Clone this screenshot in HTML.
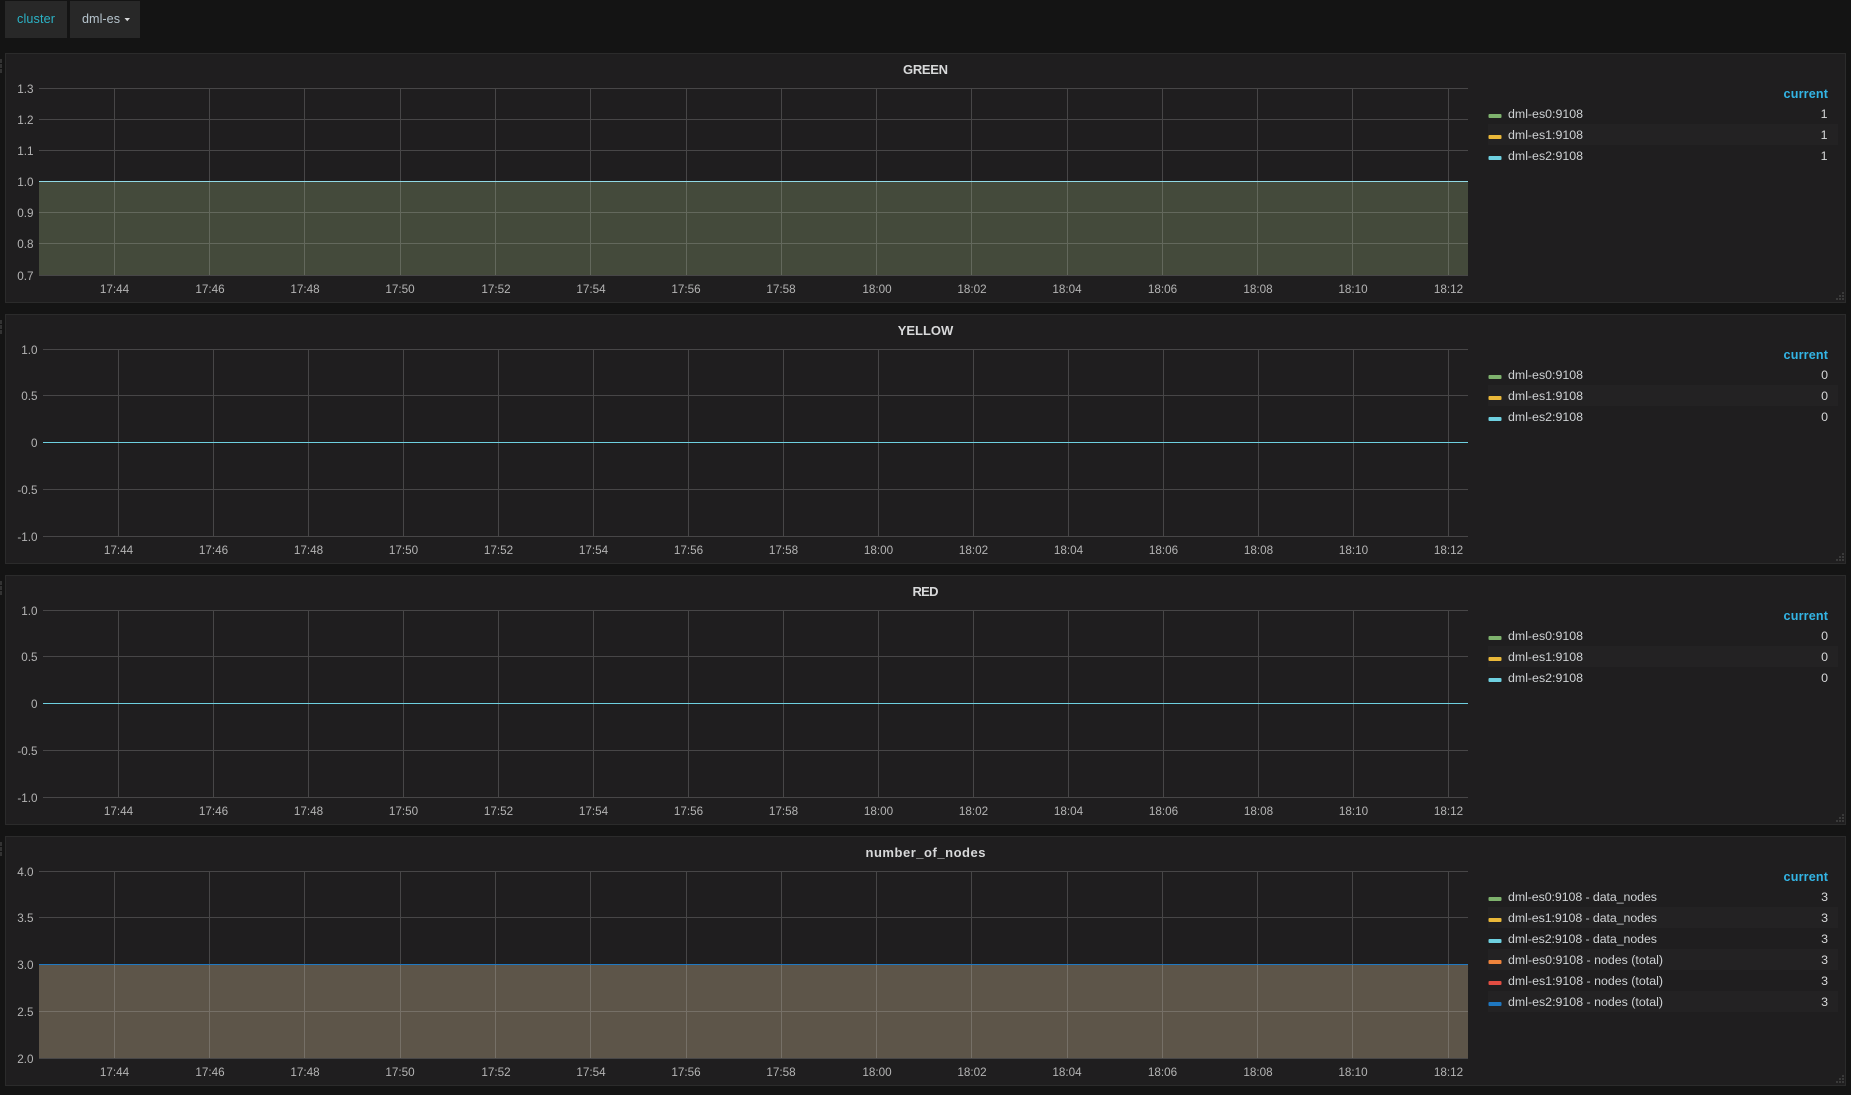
<!DOCTYPE html>
<html><head><meta charset="utf-8"><title>cluster</title>
<style>
html,body{margin:0;padding:0;background:#141414;width:1851px;height:1095px;overflow:hidden}
svg{display:block;font-family:"Liberation Sans",sans-serif}
.p{fill:#1f1e1f;stroke:#2b2b2b}
.g{stroke:#c8c8c8;stroke-opacity:.24;stroke-width:1;fill:none}
.t{fill:#d8d9da;font-size:13px;font-weight:bold;text-anchor:middle}
.x{fill:#b4b4b4;font-size:11.7px;text-anchor:middle}
.y{fill:#b4b4b4;font-size:11.7px;text-anchor:end}
.l{fill:#cfd2d4;font-size:12.4px}
.v{fill:#d8d9da;font-size:12.4px;text-anchor:end}
.c{fill:#33b5e5;font-size:12.6px;font-weight:bold;text-anchor:end}
.s{fill:#232223}
.h{fill:#3a3a3a}
.b{fill:#333}
</style></head><body>
<svg width="1851" height="1095" viewBox="0 0 1851 1095" xmlns="http://www.w3.org/2000/svg">
<rect x="5" y="1" width="62" height="37" fill="#282828"/>
<rect x="70" y="1" width="70" height="37" fill="#282828"/>
<text x="17" y="23" font-size="12.6" fill="#2bb3c6" textLength="38">cluster</text>
<text x="82" y="23" font-size="12.6" fill="#b6c4cd" textLength="38">dml-es</text>
<path d="M124.5 18h5.5l-2.75 3.2z" fill="#d8d9da"/>

<!-- Panel 1 -->
<rect class="p" x="5.5" y="53.5" width="1840" height="249"/>
<path class="b" d="M0 59h2v4H0zM0 64h2v4H0zM0 69h2v4H0z"/>
<rect x="39" y="181" width="1429" height="94" fill="#444a3b"/>
<path class="g" d="M39 88.5H1468M39 119.5H1468M39 150.5H1468M39 212.5H1468M39 243.5H1468M39 275.5H1468M114.5 88V275M209.5 88V275M304.5 88V275M400.5 88V275M495.5 88V275M590.5 88V275M686.5 88V275M781.5 88V275M876.5 88V275M971.5 88V275M1067.5 88V275M1162.5 88V275M1257.5 88V275M1352.5 88V275M1448.5 88V275"/>
<path d="M39 181.5H1468" stroke="#90d8e4" stroke-width="1"/>
<text class="t" x="925.5" y="74" textLength="45">GREEN</text>
<text class="y" x="33.5" y="93">1.3</text><text class="y" x="33.5" y="124">1.2</text><text class="y" x="33.5" y="155">1.1</text><text class="y" x="33.5" y="186">1.0</text><text class="y" x="33.5" y="217">0.9</text><text class="y" x="33.5" y="248">0.8</text><text class="y" x="33.5" y="280">0.7</text>
<text class="x" x="114.5" y="293">17:44</text><text class="x" x="210" y="293">17:46</text><text class="x" x="305" y="293">17:48</text><text class="x" x="400" y="293">17:50</text><text class="x" x="496" y="293">17:52</text><text class="x" x="591" y="293">17:54</text><text class="x" x="686" y="293">17:56</text><text class="x" x="781" y="293">17:58</text><text class="x" x="877" y="293">18:00</text><text class="x" x="972" y="293">18:02</text><text class="x" x="1067" y="293">18:04</text><text class="x" x="1162.5" y="293">18:06</text><text class="x" x="1258" y="293">18:08</text><text class="x" x="1353" y="293">18:10</text><text class="x" x="1448.5" y="293">18:12</text>
<text class="c" x="1828" y="98" textLength="44.5">current</text>
<rect class="s" x="1488" y="124" width="350" height="21"/>
<rect x="1488.5" y="114" width="13" height="4" rx="1" fill="#7eb26d"/><rect x="1488.5" y="135" width="13" height="4" rx="1" fill="#eab839"/><rect x="1488.5" y="156" width="13" height="4" rx="1" fill="#6ed0e0"/>
<text class="l" x="1508" y="118" textLength="75">dml-es0:9108</text><text class="l" x="1508" y="139" textLength="75">dml-es1:9108</text><text class="l" x="1508" y="160" textLength="75">dml-es2:9108</text>
<text class="v" x="1827.5" y="118">1</text><text class="v" x="1827.5" y="139">1</text><text class="v" x="1827.5" y="160">1</text>
<path class="h" d="M1842 292h2v2h-2zM1839 295h2v2h-2zM1842 295h2v2h-2zM1836 298h2v2h-2zM1839 298h2v2h-2zM1842 298h2v2h-2z"/>

<!-- Panel 2 -->
<rect class="p" x="5.5" y="314.5" width="1840" height="249"/>
<path class="b" d="M0 320h2v4H0zM0 325h2v4H0zM0 330h2v4H0z"/>
<path class="g" d="M43 349.5H1468M43 395.5H1468M43 489.5H1468M43 536.5H1468M118.5 349V536M213.5 349V536M308.5 349V536M403.5 349V536M498.5 349V536M593.5 349V536M688.5 349V536M783.5 349V536M878.5 349V536M973.5 349V536M1068.5 349V536M1163.5 349V536M1258.5 349V536M1353.5 349V536M1448.5 349V536"/>
<path d="M43 442.5H1468" stroke="#6ed0e0" stroke-width="1"/>
<text class="t" x="925.5" y="335" textLength="55.5">YELLOW</text>
<text class="y" x="37.5" y="354">1.0</text><text class="y" x="37.5" y="400">0.5</text><text class="y" x="37.5" y="447">0</text><text class="y" x="37.5" y="494">-0.5</text><text class="y" x="37.5" y="541">-1.0</text>
<text class="x" x="118.5" y="554">17:44</text><text class="x" x="213.5" y="554">17:46</text><text class="x" x="308.5" y="554">17:48</text><text class="x" x="403.5" y="554">17:50</text><text class="x" x="498.5" y="554">17:52</text><text class="x" x="593.5" y="554">17:54</text><text class="x" x="688.5" y="554">17:56</text><text class="x" x="783.5" y="554">17:58</text><text class="x" x="878.5" y="554">18:00</text><text class="x" x="973.5" y="554">18:02</text><text class="x" x="1068.5" y="554">18:04</text><text class="x" x="1163.5" y="554">18:06</text><text class="x" x="1258.5" y="554">18:08</text><text class="x" x="1353.5" y="554">18:10</text><text class="x" x="1448.5" y="554">18:12</text>
<text class="c" x="1828" y="359" textLength="44.5">current</text>
<rect class="s" x="1488" y="385" width="350" height="21"/>
<rect x="1488.5" y="375" width="13" height="4" rx="1" fill="#7eb26d"/><rect x="1488.5" y="396" width="13" height="4" rx="1" fill="#eab839"/><rect x="1488.5" y="417" width="13" height="4" rx="1" fill="#6ed0e0"/>
<text class="l" x="1508" y="379" textLength="75">dml-es0:9108</text><text class="l" x="1508" y="400" textLength="75">dml-es1:9108</text><text class="l" x="1508" y="421" textLength="75">dml-es2:9108</text>
<text class="v" x="1828" y="379">0</text><text class="v" x="1828" y="400">0</text><text class="v" x="1828" y="421">0</text>
<path class="h" d="M1842 553h2v2h-2zM1839 556h2v2h-2zM1842 556h2v2h-2zM1836 559h2v2h-2zM1839 559h2v2h-2zM1842 559h2v2h-2z"/>

<!-- Panel 3 -->
<rect class="p" x="5.5" y="575.5" width="1840" height="249"/>
<path class="b" d="M0 581h2v4H0zM0 586h2v4H0zM0 591h2v4H0z"/>
<path class="g" d="M43 610.5H1468M43 656.5H1468M43 750.5H1468M43 797.5H1468M118.5 610V797M213.5 610V797M308.5 610V797M403.5 610V797M498.5 610V797M593.5 610V797M688.5 610V797M783.5 610V797M878.5 610V797M973.5 610V797M1068.5 610V797M1163.5 610V797M1258.5 610V797M1353.5 610V797M1448.5 610V797"/>
<path d="M43 703.5H1468" stroke="#6ed0e0" stroke-width="1"/>
<text class="t" x="925.5" y="596" textLength="26">RED</text>
<text class="y" x="37.5" y="615">1.0</text><text class="y" x="37.5" y="661">0.5</text><text class="y" x="37.5" y="708">0</text><text class="y" x="37.5" y="755">-0.5</text><text class="y" x="37.5" y="802">-1.0</text>
<text class="x" x="118.5" y="815">17:44</text><text class="x" x="213.5" y="815">17:46</text><text class="x" x="308.5" y="815">17:48</text><text class="x" x="403.5" y="815">17:50</text><text class="x" x="498.5" y="815">17:52</text><text class="x" x="593.5" y="815">17:54</text><text class="x" x="688.5" y="815">17:56</text><text class="x" x="783.5" y="815">17:58</text><text class="x" x="878.5" y="815">18:00</text><text class="x" x="973.5" y="815">18:02</text><text class="x" x="1068.5" y="815">18:04</text><text class="x" x="1163.5" y="815">18:06</text><text class="x" x="1258.5" y="815">18:08</text><text class="x" x="1353.5" y="815">18:10</text><text class="x" x="1448.5" y="815">18:12</text>
<text class="c" x="1828" y="620" textLength="44.5">current</text>
<rect class="s" x="1488" y="646" width="350" height="21"/>
<rect x="1488.5" y="636" width="13" height="4" rx="1" fill="#7eb26d"/><rect x="1488.5" y="657" width="13" height="4" rx="1" fill="#eab839"/><rect x="1488.5" y="678" width="13" height="4" rx="1" fill="#6ed0e0"/>
<text class="l" x="1508" y="640" textLength="75">dml-es0:9108</text><text class="l" x="1508" y="661" textLength="75">dml-es1:9108</text><text class="l" x="1508" y="682" textLength="75">dml-es2:9108</text>
<text class="v" x="1828" y="640">0</text><text class="v" x="1828" y="661">0</text><text class="v" x="1828" y="682">0</text>
<path class="h" d="M1842 814h2v2h-2zM1839 817h2v2h-2zM1842 817h2v2h-2zM1836 820h2v2h-2zM1839 820h2v2h-2zM1842 820h2v2h-2z"/>

<!-- Panel 4 -->
<rect class="p" x="5.5" y="836.5" width="1840" height="249"/>
<path class="b" d="M0 842h2v4H0zM0 847h2v4H0zM0 852h2v4H0z"/>
<rect x="39" y="964" width="1429" height="94" fill="#5d5549"/>
<path class="g" d="M39 871.5H1468M39 917.5H1468M39 1011.5H1468M39 1058.5H1468M114.5 871V1058M209.5 871V1058M304.5 871V1058M400.5 871V1058M495.5 871V1058M590.5 871V1058M686.5 871V1058M781.5 871V1058M876.5 871V1058M971.5 871V1058M1067.5 871V1058M1162.5 871V1058M1257.5 871V1058M1352.5 871V1058M1448.5 871V1058"/>
<path d="M39 964.5H1468" stroke="#1f78c1" stroke-width="1"/>
<text class="t" x="925.5" y="857" textLength="120">number_of_nodes</text>
<text class="y" x="33.5" y="876">4.0</text><text class="y" x="33.5" y="922">3.5</text><text class="y" x="33.5" y="969">3.0</text><text class="y" x="33.5" y="1016">2.5</text><text class="y" x="33.5" y="1063">2.0</text>
<text class="x" x="114.5" y="1076">17:44</text><text class="x" x="210" y="1076">17:46</text><text class="x" x="305" y="1076">17:48</text><text class="x" x="400" y="1076">17:50</text><text class="x" x="496" y="1076">17:52</text><text class="x" x="591" y="1076">17:54</text><text class="x" x="686" y="1076">17:56</text><text class="x" x="781" y="1076">17:58</text><text class="x" x="877" y="1076">18:00</text><text class="x" x="972" y="1076">18:02</text><text class="x" x="1067" y="1076">18:04</text><text class="x" x="1162.5" y="1076">18:06</text><text class="x" x="1258" y="1076">18:08</text><text class="x" x="1353" y="1076">18:10</text><text class="x" x="1448.5" y="1076">18:12</text>
<text class="c" x="1828" y="881" textLength="44.5">current</text>
<rect class="s" x="1488" y="907" width="350" height="21"/><rect class="s" x="1488" y="949" width="350" height="21"/><rect class="s" x="1488" y="991" width="350" height="21"/>
<rect x="1488.5" y="897" width="13" height="4" rx="1" fill="#7eb26d"/><rect x="1488.5" y="918" width="13" height="4" rx="1" fill="#eab839"/><rect x="1488.5" y="939" width="13" height="4" rx="1" fill="#6ed0e0"/><rect x="1488.5" y="960" width="13" height="4" rx="1" fill="#ef843c"/><rect x="1488.5" y="981" width="13" height="4" rx="1" fill="#e24d42"/><rect x="1488.5" y="1002" width="13" height="4" rx="1" fill="#1f78c1"/>
<text class="l" x="1508" y="901" textLength="149">dml-es0:9108 - data_nodes</text><text class="l" x="1508" y="922" textLength="149">dml-es1:9108 - data_nodes</text><text class="l" x="1508" y="943" textLength="149">dml-es2:9108 - data_nodes</text><text class="l" x="1508" y="964" textLength="155">dml-es0:9108 - nodes (total)</text><text class="l" x="1508" y="985" textLength="155">dml-es1:9108 - nodes (total)</text><text class="l" x="1508" y="1006" textLength="155">dml-es2:9108 - nodes (total)</text>
<text class="v" x="1828" y="901">3</text><text class="v" x="1828" y="922">3</text><text class="v" x="1828" y="943">3</text><text class="v" x="1828" y="964">3</text><text class="v" x="1828" y="985">3</text><text class="v" x="1828" y="1006">3</text>
<path class="h" d="M1842 1075h2v2h-2zM1839 1078h2v2h-2zM1842 1078h2v2h-2zM1836 1081h2v2h-2zM1839 1081h2v2h-2zM1842 1081h2v2h-2z"/>
</svg>
</body></html>
